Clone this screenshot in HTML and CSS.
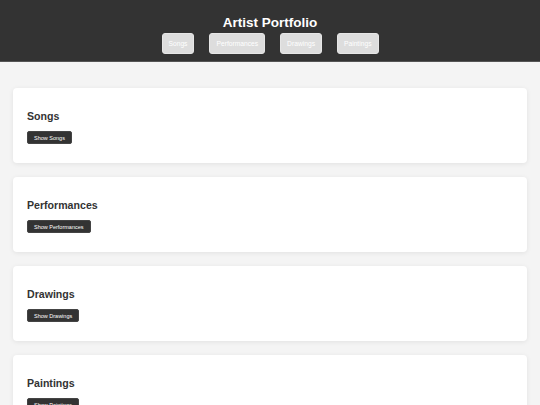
FILE: index.html
```html
<!DOCTYPE html>
<html lang="en">
<head>
  <meta charset="UTF-8">
  <meta name="viewport" content="width=device-width, initial-scale=1.0">
  <title>Artist Portfolio</title>
  <link rel="stylesheet" href="styles.css">
</head>
<body>
  <header class="site-header">
    <h1>Artist Portfolio</h1>
    <nav class="nav">
      <button class="nav-btn">Songs</button>
      <button class="nav-btn">Performances</button>
      <button class="nav-btn">Drawings</button>
      <button class="nav-btn">Paintings</button>
    </nav>
  </header>

  <main class="content">
    <section class="card">
      <h2>Songs</h2>
      <button class="show-btn">Show Songs</button>
    </section>
    <section class="card">
      <h2>Performances</h2>
      <button class="show-btn">Show Performances</button>
    </section>
    <section class="card">
      <h2>Drawings</h2>
      <button class="show-btn">Show Drawings</button>
    </section>
    <section class="card">
      <h2>Paintings</h2>
      <button class="show-btn">Show Paintings</button>
    </section>
  </main>
</body>
</html>
```

FILE: styles.css
```css
body {
  font-family: 'Liberation Sans', Arial, sans-serif;
  margin: 0;
  background-color: #f4f4f4;
  color: #333;
}

.site-header {
  background: #333;
  color: white;
  text-align: center;
  padding: 15px 0 7px;
  height: 39px;
  border-bottom: 1px solid #555;
}

.site-header h1 {
  margin: 0;
  font-size: 13.5px;
  line-height: 16px;
}

.nav {
  display: flex;
  justify-content: center;
  gap: 15px;
  margin-top: 2px;
}

.nav-btn {
  background: #ddd;
  color: white;
  border: 1px solid #e6e6e6;
  border-radius: 3px;
  font-family: inherit;
  font-size: 6.7px;
  height: 21px;
  padding: 0 6px;
}

.content {
  display: flex;
  flex-direction: column;
  gap: 14px;
  padding: 26px 13px;
}

.card {
  background: white;
  border-radius: 4px;
  box-shadow: 0 1px 5px rgba(0,0,0,0.08);
  padding: 14px 14px 19px;
}

.card h2 {
  margin: 8px 0 9px;
  font-size: 10.6px;
  line-height: 12px;
  color: #333;
}

.show-btn {
  display: block;
  background: #333;
  color: white;
  border: 1px solid #444;
  border-radius: 2px;
  font-family: inherit;
  font-size: 5.5px;
  height: 13px;
  padding: 0 6px;
}
```
